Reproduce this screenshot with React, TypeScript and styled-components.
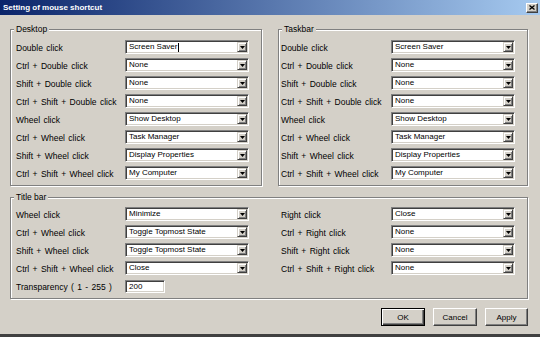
import React from "react";
import styled, { createGlobalStyle, css } from "styled-components";

const GlobalStyle = createGlobalStyle`
  html, body { margin: 0; padding: 0; background: #d4d0c8; }
  body { font-family: "Liberation Sans", Arial, sans-serif; font-size: 8px; color: #000; }
  * { box-sizing: border-box; }
`;

const Window = styled.div`
  width: 540px;
  height: 337px;
  display: flex;
  flex-direction: column;
  background: #d4d0c8;
  border-bottom: 3px solid #404040;
`;

const TitleBar = styled.div`
  height: 15px;
  flex: none;
  display: flex;
  align-items: center;
  justify-content: space-between;
  padding: 0 2px 0 3px;
  background: linear-gradient(to right, #0a246a 0%, #a6caf0 100%);
`;

const TitleText = styled.span`
  color: #fff;
  font-weight: bold;
  font-size: 8px;
  line-height: 15px;
  white-space: nowrap;
`;

const CloseButton = styled.div`
  width: 12px;
  height: 10px;
  display: flex;
  align-items: center;
  justify-content: center;
  background: #d4d0c8;
  border: 1px solid;
  border-color: #fff #404040 #404040 #fff;
  box-shadow: inset -1px -1px 0 #808080;
`;

const Body = styled.div`
  display: flex;
  flex-direction: column;
  padding: 14px 12px 0 10px;
`;

const TopRow = styled.div`
  display: flex;
  gap: 16px;
`;

const Group = styled.div<{ $pl: number; $pt: number }>`
  position: relative;
  border: 1px solid #808080;
  box-shadow: inset 1px 1px 0 #fff, 1px 1px 0 #fff;
  padding: ${(p) => p.$pt}px 12px 5px ${(p) => p.$pl}px;
`;

const Legend = styled.span`
  position: absolute;
  top: -6px;
  left: 3px;
  height: 10px;
  line-height: 10px;
  padding: 0 2px;
  font-size: 8.5px;
  background: #d4d0c8;
  white-space: nowrap;
`;

const Rows = styled.div<{ $labelW: number }>`
  display: grid;
  grid-template-columns: ${(p) => p.$labelW}px 124px;
  grid-auto-rows: 14px;
  row-gap: 4px;
  align-items: center;
`;

const Label = styled.span`
  font-size: 8.5px;
  word-spacing: 1px;
  white-space: nowrap;
  padding-top: 2px;
`;

const sunken = css`
  background: #fff;
  border: 1px solid;
  border-color: #808080 #fff #fff #808080;
  box-shadow: inset 1px 1px 0 #404040, inset -1px -1px 0 #d4d0c8;
`;

const Combo = styled.div`
  ${sunken};
  width: 124px;
  height: 14px;
  display: flex;
  align-items: stretch;
  padding: 1px;
`;

const ComboText = styled.span`
  flex: 1;
  display: flex;
  align-items: center;
  padding-left: 2px;
  font-size: 8px;
  line-height: 10px;
  white-space: nowrap;
  overflow: hidden;
`;

const Caret = styled.span`
  display: inline-block;
  width: 1px;
  height: 9px;
  background: #000;
  margin-left: 1px;
`;

const ArrowButton = styled.div`
  width: 10px;
  display: flex;
  align-items: center;
  justify-content: center;
  background: #d4d0c8;
  border: 1px solid;
  border-color: #d4d0c8 #404040 #404040 #d4d0c8;
  box-shadow: inset 1px 1px 0 #fff, inset -1px -1px 0 #808080;
`;

const TextInput = styled.div`
  ${sunken};
  width: 40px;
  height: 13px;
  justify-self: start;
  padding-left: 3px;
  font-size: 8px;
  line-height: 11px;
`;

const TitleGroupContent = styled.div`
  display: flex;
  gap: 32px;
  align-items: flex-start;
`;

const TitleGroupWrap = styled.div`
  margin-top: 11px;
`;

const ButtonRow = styled.div`
  display: flex;
  justify-content: flex-end;
  gap: 8px;
  margin-top: 9px;
`;

const Button = styled.div<{ $w: number; $default?: boolean }>`
  width: ${(p) => p.$w}px;
  height: 18px;
  display: flex;
  align-items: center;
  justify-content: center;
  font-size: 8px;
  background: #d4d0c8;
  border: 1px solid;
  border-color: #fff #404040 #404040 #fff;
  box-shadow: inset -1px -1px 0 #808080;
  ${(p) =>
    p.$default &&
    css`
      border: 1px solid #000;
      box-shadow: inset 1px 1px 0 #fff, inset -1px -1px 0 #404040, inset -2px -2px 0 #808080;
    `}
`;

const DownArrow = () => (
  <svg width="5" height="3" viewBox="0 0 5 3">
    <path d="M0 0H5L2.5 3Z" fill="#000" />
  </svg>
);

const CloseX = () => (
  <svg width="6" height="5" viewBox="0 0 6 5">
    <path d="M0.5 0.5L5.5 4.5M5.5 0.5L0.5 4.5" stroke="#000" strokeWidth="1.3" />
  </svg>
);

type Row = [string, string];

const Select = ({ value, caret }: { value: string; caret?: boolean }) => (
  <Combo>
    <ComboText>
      {value}
      {caret && <Caret />}
    </ComboText>
    <ArrowButton>
      <DownArrow />
    </ArrowButton>
  </Combo>
);

const RowList = ({ rows, labelW, caretFirst }: { rows: Row[]; labelW: number; caretFirst?: boolean }) => (
  <Rows $labelW={labelW}>
    {rows.map(([l, v], i) => (
      <React.Fragment key={l}>
        <Label>{l}</Label>
        <Select value={v} caret={caretFirst && i === 0} />
      </React.Fragment>
    ))}
  </Rows>
);

const clickRows: Row[] = [
  ["Double click", "Screen Saver"],
  ["Ctrl + Double click", "None"],
  ["Shift + Double click", "None"],
  ["Ctrl + Shift + Double click", "None"],
  ["Wheel click", "Show Desktop"],
  ["Ctrl + Wheel click", "Task Manager"],
  ["Shift + Wheel click", "Display Properties"],
  ["Ctrl + Shift + Wheel click", "My Computer"],
];

const titleLeft: Row[] = [
  ["Wheel click", "Minimize"],
  ["Ctrl + Wheel click", "Toggle Topmost State"],
  ["Shift + Wheel click", "Toggle Topmost State"],
  ["Ctrl + Shift + Wheel click", "Close"],
];

const titleRight: Row[] = [
  ["Right click", "Close"],
  ["Ctrl + Right click", "None"],
  ["Shift + Right click", "None"],
  ["Ctrl + Shift + Right click", "None"],
];

export default function App() {
  return (
    <>
      <GlobalStyle />
      <Window>
        <TitleBar>
          <TitleText>Setting of mouse shortcut</TitleText>
          <CloseButton>
            <CloseX />
          </CloseButton>
        </TitleBar>
        <Body>
          <TopRow>
            <Group $pl={5} $pt={10}>
              <Legend>Desktop</Legend>
              <RowList rows={clickRows} labelW={109} caretFirst />
            </Group>
            <Group $pl={2} $pt={10}>
              <Legend>Taskbar</Legend>
              <RowList rows={clickRows} labelW={110} />
            </Group>
          </TopRow>
          <TitleGroupWrap>
            <Group $pl={5} $pt={9}>
              <Legend>Title bar</Legend>
              <TitleGroupContent>
                <Rows $labelW={109}>
                  {titleLeft.map(([l, v]) => (
                    <React.Fragment key={l}>
                      <Label>{l}</Label>
                      <Select value={v} />
                    </React.Fragment>
                  ))}
                  <Label>Transparency ( 1 - 255 )</Label>
                  <TextInput>200</TextInput>
                </Rows>
                <RowList rows={titleRight} labelW={110} />
              </TitleGroupContent>
            </Group>
          </TitleGroupWrap>
          <ButtonRow>
            <Button $w={44} $default>OK</Button>
            <Button $w={44}>Cancel</Button>
            <Button $w={43}>Apply</Button>
          </ButtonRow>
        </Body>
      </Window>
    </>
  );
}
